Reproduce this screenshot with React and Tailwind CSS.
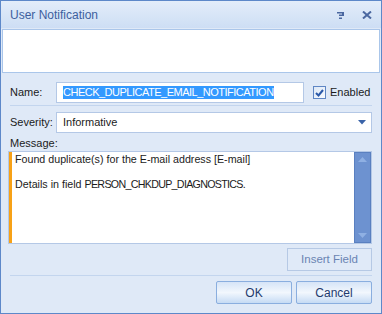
import React from 'react';

const HelpGlyph = () => (
  <svg width="8" height="7" viewBox="0 0 8 7" className="block">
    <rect x="0" y="0" width="7" height="1.5" fill="#4a67a0" />
    <rect x="5" y="0" width="2" height="3.5" fill="#4a67a0" />
    <rect x="2" y="2.5" width="5" height="1.5" fill="#4a67a0" />
    <rect x="2" y="5.5" width="3" height="1.5" fill="#4a67a0" />
  </svg>
);

const CloseGlyph = () => (
  <svg width="10" height="8" viewBox="0 0 10 8" className="block">
    <path d="M1 0.5 L9 7.5 M9 0.5 L1 7.5" stroke="#4a67a0" strokeWidth="2" />
  </svg>
);

const ScrollArrow = ({ down }) => (
  <svg width="9" height="5" viewBox="0 0 9 5" className="block">
    <path d={down ? 'M0 0 L9 0 L4.5 5 Z' : 'M0 5 L9 5 L4.5 0 Z'} fill="#8fb0e3" />
  </svg>
);

const Field = ({ className, children }) => (
  <div className={`flex h-[21px] border border-[#b4c8e6] bg-white ${className}`}>
    <div className="w-[3px] shrink-0 bg-[#f7a117]" />
    {children}
  </div>
);

const App = () => {
  return (
    <div
      className="flex h-[314px] w-[382px] flex-col border border-[#5d88c9] bg-[#dfe9f7] text-[11px] text-[#1b1b1b]"
      style={{ fontFamily: '"Liberation Sans", Arial, sans-serif' }}
    >
      <div className="flex h-[27px] shrink-0 items-center bg-gradient-to-b from-[#e3edfa] to-[#cddef4] pl-[9px] pr-[9px]">
        <span className="text-[12px] text-[#3d5f9e]">User Notification</span>
        <div className="ml-auto flex items-center gap-[17px] pt-[1px]">
          <HelpGlyph />
          <CloseGlyph />
        </div>
      </div>

      <div className="mx-px mt-px h-[44px] shrink-0 border border-[#aac6ea] bg-white" />

      <div className="flex flex-col px-[9px]">
        <div className="mt-[9px] flex items-center">
          <span className="w-[46px] shrink-0">Name:</span>
          <Field className="w-[248px] items-center">
            <span className="ml-[3px] bg-[#3399ff] leading-[13px] tracking-[-0.5px] text-white">
              CHECK_DUPLICATE_EMAIL_NOTIFICATION
            </span>
          </Field>
          <label className="ml-[9px] flex items-center gap-[4px]">
            <span className="flex h-[13px] w-[13px] items-center justify-center border border-[#5f86c4] bg-gradient-to-br from-[#dde8f6] to-[#f7faff]">
              <svg width="9" height="8" viewBox="0 0 9 8" className="block">
                <path d="M1 4 L3.5 6.5 L8 1" stroke="#2b59a8" strokeWidth="2" fill="none" />
              </svg>
            </span>
            <span>Enabled</span>
          </label>
        </div>

        <div className="mt-[2px] h-px bg-[#c3d5ee]" />

        <div className="mt-[6px] flex items-center">
          <span className="w-[46px] shrink-0">Severity:</span>
          <Field className="flex-1 items-center">
            <span className="ml-[3px]">Informative</span>
            <svg width="8" height="5" viewBox="0 0 8 5" className="ml-auto mr-[5px] block">
              <path d="M0 0 L8 0 L4 4.5 Z" fill="#3a63a8" />
            </svg>
          </Field>
        </div>

        <div className="mt-[4px] h-[13px] leading-[13px]">Message:</div>

        <div className="-ml-[2px] mt-px flex h-[93px] border border-[#b4c8e6] bg-white">
          <div className="w-[3px] shrink-0 bg-[#f7a117]" />
          <div className="flex-1 px-[3px] pt-[1px] text-[10.7px] leading-[13px]">
            <div>Found duplicate(s) for the E-mail address [E-mail]</div>
            <div className="h-[12px]" />
            <div>
              Details in field <span className="tracking-[-0.7px]">PERSON_CHKDUP_DIAGNOSTICS.</span>
            </div>
          </div>
          <div className="flex w-[17px] shrink-0 flex-col items-center justify-between border border-[#5a80c0] bg-[#6d92d0] py-[4px]">
            <ScrollArrow />
            <ScrollArrow down />
          </div>
        </div>

        <div className="mt-[4px] flex justify-end">
          <button className="h-[23px] w-[85px] border border-[#b6c9e5] bg-[#e0eaf8] text-[11.5px] text-[#6a84b3]">
            Insert Field
          </button>
        </div>

        <div className="mt-[4px] h-px bg-[#c3d5ee]" />

        <div className="mt-[5px] flex justify-end gap-[4px]">
          {['OK', 'Cancel'].map((label) => (
            <button
              key={label}
              className="h-[23px] w-[76px] rounded-[2px] border border-[#8aaedf] bg-gradient-to-b from-[#d6e4f7] via-[#f2f7fd] to-[#c6dbf4] text-[12px] text-[#1f3a6e]"
            >
              {label}
            </button>
          ))}
        </div>
      </div>
    </div>
  );
};

export default App;
